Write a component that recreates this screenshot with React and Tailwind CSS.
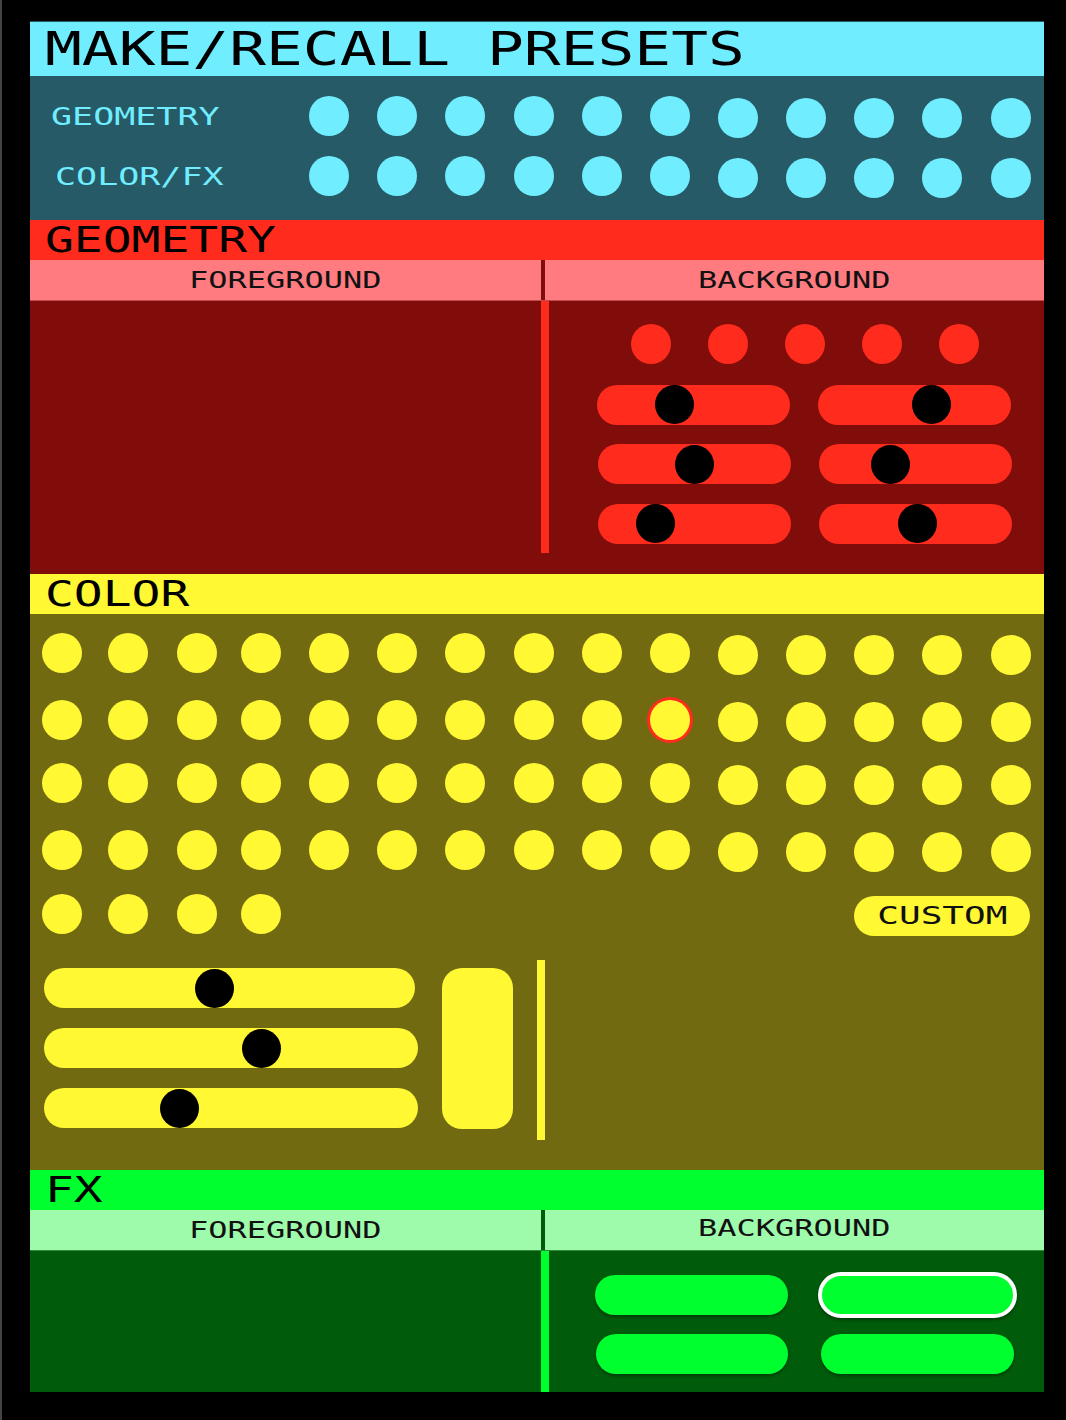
import React from 'react';

const presetLeftTracks = 'grid-cols-[68px_68px_69px_68px_68px_68px]';

const Dot = ({ className = 'bg-[#fff833]' }) => (
  <div className={`w-[39.5px] h-[39.5px] rounded-full ${className}`} />
);

const Slider = ({ width, center, color, className = '' }) => (
  <div className={`relative h-10 rounded-full ${width} ${color} ${className}`}>
    <div
      className="absolute top-[0.5px] w-[39px] h-[39px] rounded-full bg-black"
      style={{ left: `${center - 19.5}px` }}
    />
  </div>
);

const SubHeader = ({ dark, divider, bg, border, bgOffset = '' }) => (
  <div className={`flex h-[41px] border-b ${bg} ${border}`}>
    <div className="w-[511px] flex items-center justify-center">
      <span className="inline-block scale-x-[1.39] text-[23px] leading-none text-[#111]">FOREGROUND</span>
    </div>
    <div className={`w-1 ${divider}`} />
    <div className="flex-1 flex items-center justify-center">
      <span className={`inline-block scale-x-[1.39] text-[23px] leading-none text-[#111] ${bgOffset}`}>BACKGROUND</span>
    </div>
  </div>
);

const Heading = ({ children }) => (
  <span className="inline-block origin-left scale-x-[1.37] text-[35px] leading-none text-black">{children}</span>
);

export default function App() {
  return (
    <div className="h-[1420px] w-[1066px] overflow-hidden bg-black border-l-2 border-[#444] pl-[28px] pt-[21px] font-['DejaVu_Sans_Mono',monospace]">
      <div className="w-[1014px]">
        {/* Presets */}
        <div className="h-[55px] bg-[#70edff] border-t border-[#265a66] pl-[15px] flex items-center">
          <span className="inline-block origin-left scale-x-[1.33] text-[46px] leading-none text-black whitespace-nowrap">MAKE/RECALL PRESETS</span>
        </div>
        <div className="h-[144px] bg-[#265a66] pt-[20px] flex">
          <div className="w-[279px] flex flex-col gap-5 text-[#70edff] text-[25px] leading-none">
            <div className="h-10 pl-[21px] flex items-center">
              <span className="inline-block origin-left scale-x-[1.4]">GEOMETRY</span>
            </div>
            <div className="h-10 pl-[25px] flex items-center">
              <span className="inline-block origin-left scale-x-[1.4]">COLOR/FX</span>
            </div>
          </div>
          <div className={`grid ${presetLeftTracks} grid-rows-[40px_40px] gap-y-5 w-[409px]`}>
            {Array.from({ length: 12 }).map((_, i) => (
              <Dot key={i} className="bg-[#70edff]" />
            ))}
          </div>
          <div className="grid grid-cols-[68px_68px_68px_69px_40px] grid-rows-[40px_40px] gap-y-5 mt-[2px]">
            {Array.from({ length: 10 }).map((_, i) => (
              <Dot key={i} className="bg-[#70edff]" />
            ))}
          </div>
        </div>

        {/* Geometry */}
        <div className="h-10 bg-[#ff2b1c] pl-[15px] flex items-center">
          <Heading>GEOMETRY</Heading>
        </div>
        <SubHeader bg="bg-[#ff7b80]" border="border-[#c04b4b]" divider="bg-[#800d0a]" />
        <div className="h-[272px] bg-[#800d0a] flex">
          <div className="w-[511px]" />
          <div className="w-2 h-[252px] bg-[#ff2b1c]" />
          <div className="flex-1 pt-[23px]">
            <div className="flex gap-[37.5px] ml-[82px]">
              {Array.from({ length: 5 }).map((_, i) => (
                <Dot key={i} className="bg-[#ff2b1c]" />
              ))}
            </div>
            <div className="grid grid-cols-[193px_193px] gap-x-7 gap-y-[19.5px] mt-[21px] ml-[49px]">
              <Slider width="w-[193px]" center={77} color="bg-[#ff2b1c]" className="-ml-px" />
              <Slider width="w-[193px]" center={113} color="bg-[#ff2b1c]" className="-ml-px" />
              <Slider width="w-[193px]" center={96} color="bg-[#ff2b1c]" />
              <Slider width="w-[193px]" center={71} color="bg-[#ff2b1c]" />
              <Slider width="w-[193px]" center={57} color="bg-[#ff2b1c]" />
              <Slider width="w-[193px]" center={98} color="bg-[#ff2b1c]" />
            </div>
          </div>
        </div>

        {/* Color */}
        <div className="h-[41px] bg-[#fff833] border-t border-[#800d0a] pl-[15px] flex items-center">
          <Heading>COLOR</Heading>
        </div>
        <div className="h-[556px] bg-[#716a10] pt-[19px]">
          <div className="flex pl-3">
            <div className="grid grid-cols-[66px_69px_64px_68px_68px_68px_69px_68px_68px_68px] grid-rows-[67px_63px_67px_64px_40px] h-[301px]">
              {Array.from({ length: 44 }).map((_, i) => (
                <Dot key={i} className={i === 19 ? 'bg-[#fff833] ring-[3px] ring-[#ff2b1c]' : 'bg-[#fff833]'} />
              ))}
            </div>
            <div className="grid grid-cols-[68px_68px_68px_69px_40px] grid-rows-[67px_63px_67px_64px_40px] h-[301px] mt-[2px]">
              {Array.from({ length: 20 }).map((_, i) => (
                <Dot key={i} />
              ))}
              <div className="col-start-3 col-span-3 w-[176px] h-10 rounded-full bg-[#fff833] flex items-center justify-center">
                <span className="inline-block scale-x-[1.5] text-[24px] leading-none text-[#111]">CUSTOM</span>
              </div>
            </div>
          </div>
          <div className="flex mt-[24px] pl-[14px]">
            <div className="pt-2 flex flex-col gap-5 w-[398px]">
              <Slider width="w-[371px]" center={170} color="bg-[#fff833]" />
              <Slider width="w-[374px]" center={217} color="bg-[#fff833]" />
              <Slider width="w-[374px]" center={135} color="bg-[#fff833]" />
            </div>
            <div className="mt-2 w-[71px] h-[161px] rounded-[20px] bg-[#fff833]" />
            <div className="ml-[24px] w-2 h-[180px] bg-[#fff833]" />
          </div>
        </div>

        {/* FX */}
        <div className="h-10 bg-[#00ff2e] pl-[15px] flex items-center">
          <Heading>FX</Heading>
        </div>
        <SubHeader bg="bg-[#9dfbab]" border="border-[#2f8a3a]" divider="bg-[#005b0a]" bgOffset="-mt-1" />
        <div className="h-[141px] bg-[#005b0a] flex">
          <div className="w-[511px]" />
          <div className="w-2 h-full bg-[#00ff2e]" />
          <div className="flex-1 pt-[24px] pl-[46px]">
            <div className="grid grid-cols-[193px_193px] grid-rows-[40px_40px] gap-x-[33px] gap-y-[19px]">
              <div className="h-10 rounded-full bg-[#00ff2e] shadow-[0_2px_3px_rgba(0,0,0,0.35)]" />
              <div className="-mx-[3px] -my-[3px] h-[46px] rounded-full bg-[#00ff2e] border-4 border-white shadow-[0_2px_3px_rgba(0,0,0,0.35)]" />
              <div className="ml-px h-10 rounded-full bg-[#00ff2e] shadow-[0_2px_3px_rgba(0,0,0,0.35)]" />
              <div className="h-10 rounded-full bg-[#00ff2e] shadow-[0_2px_3px_rgba(0,0,0,0.35)]" />
            </div>
          </div>
        </div>
      </div>
    </div>
  );
}
